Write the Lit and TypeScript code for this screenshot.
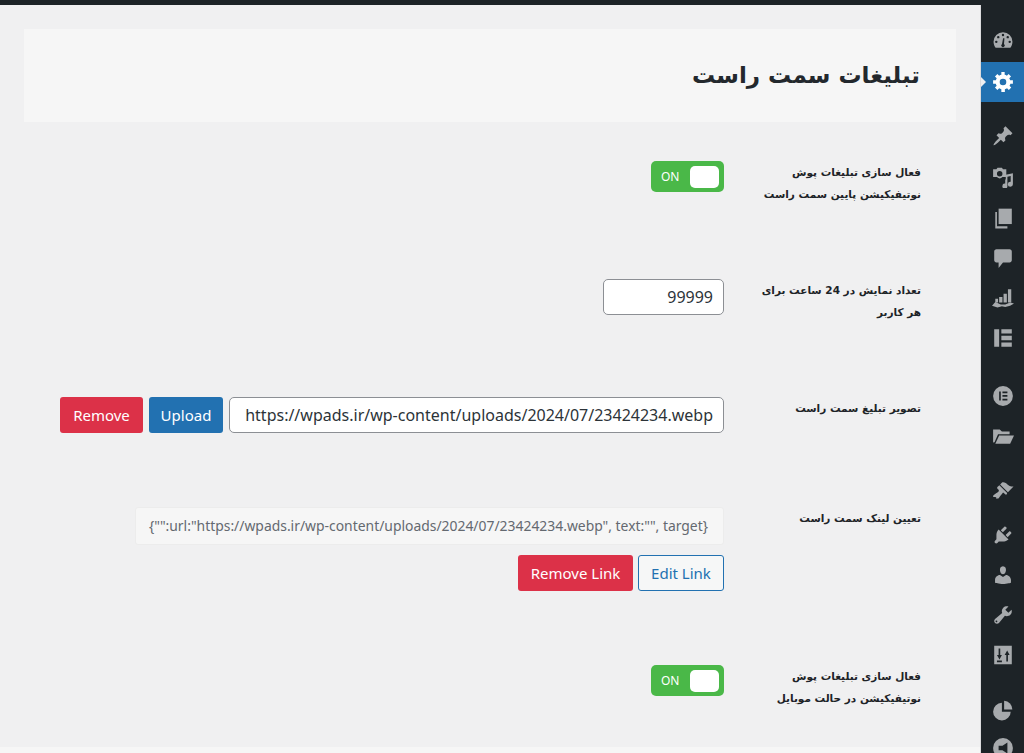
import { LitElement, html, css, svg } from "lit";
import { customElement } from "lit/decorators.js";

const URL_VALUE = "https://wpads.ir/wp-content/uploads/2024/07/23424234.webp";
const LINK_VALUE = '{"":url:"https://wpads.ir/wp-content/uploads/2024/07/23424234.webp", text:"", target}';

const icons = [
  { mt: 0, s: svg`<path fill-rule="evenodd" d="M3.3 17h13.400c1.200-1.500 1.900-3.400 1.900-5.400a8.600 8.600 0 0 0-17.200 0c0 2 .7 3.900 1.900 5.400zM10 4.300a1.100 1.100 0 1 1 0 2.200 1.100 1.100 0 0 1 0-2.200zM5.700 6.300a1.100 1.100 0 1 1 0 2.200 1.100 1.100 0 0 1 0-2.200zM14.300 6.300a1.100 1.100 0 1 1 0 2.200 1.100 1.100 0 0 1 0-2.200zM3.900 10.600a1.100 1.100 0 1 1 0 2.200 1.100 1.100 0 0 1 0-2.200zM16.100 10.600a1.100 1.100 0 1 1 0 2.200 1.100 1.100 0 0 1 0-2.200zM11.300 8.500l-.4 5.100a1.600 1.600 0 1 1-1.800 0l1-5.100z"/>` },
  { mt: 3, active: true, s: svg`<path fill-rule="evenodd" d="M19 11.500h-2.300c-.2.700-.4 1.400-.8 2l1.600 1.600-2.200 2.200-1.600-1.600c-.6.400-1.300.6-2 .8V19H8.500v-2.500c-.7-.2-1.400-.4-2-.8l-1.600 1.600-2.200-2.200 1.600-1.600c-.4-.6-.6-1.300-.8-2H1v-3h2.500c.2-.7.4-1.400.8-2L2.700 4.900l2.200-2.200 1.600 1.600c.6-.4 1.300-.6 2-.8V1h3v2.500c.7.2 1.400.4 2 .8l1.600-1.600 2.200 2.200-1.600 1.600c.4.6.6 1.300.8 2H19zM10 13a3 3 0 1 0 0-6 3 3 0 0 0 0 6z"/>` },
  { mt: 15, s: svg`<path d="M10.440 3.020l1.820-1.820 6.360 6.350-1.830 1.820c-1.050-.68-2.480-.57-3.410.36l-.75.75c-.92.93-1.040 2.350-.35 3.410l-1.830 1.820-2.410-2.410-2.800 2.790c-.42.42-3.380 2.710-3.800 2.290s1.860-3.390 2.280-3.810l2.790-2.790L4.100 9.360l1.830-1.820c1.050.69 2.480.57 3.400-.36l.75-.75c.93-.92 1.050-2.350.36-3.410z"/>` },
  { mt: 3, s: svg`<path fill-rule="evenodd" d="M1 3h3l1-1.500h4L10 3h3v7H9.500A3.500 3.500 0 0 1 4.500 10H1zM7 4.500a2.500 2.500 0 1 0 0 5 2.500 2.500 0 0 0 0-5z"/><path d="M19 6.500v10a2.300 2.300 0 1 1-2-2.200V9l-3 .7v8.500a2.300 2.300 0 1 1-2-2.200v-3.500l.5-.5V8z"/>` },
  { mt: 3, s: svg`<path d="M6 1.500h12v14H6z"/><path d="M4.500 4.500H3v15h11v-2H4.500z"/>` },
  { mt: 2, s: svg`<path d="M4 2h12c1.100 0 2 .9 2 2v8c0 1.100-.9 2-2 2h-6l-4 5v-5H4c-1.100 0-2-.9-2-2V4c0-1.100.9-2 2-2z"/>` },
  { mt: 1, s: svg`<path d="M6.500 10h3v5h-3zM10.500 7h3v8h-3zM14.500 3h3v12h-3zM3 11.500h2.500V15H3z"/><path d="M0 18l3-3.500 5 2.300h4l4.500-1.800 3.500 1-3.500 2-4.500 1-3-.5-4 1z"/>` },
  { mt: 3, s: svg`<path d="M2 2h4.500v16H2zM8.500 2H18v4H8.500zM8.500 8H18v4H8.500zM8.500 14H18v4H8.500z"/>` },
  { mt: 20, s: svg`<path fill-rule="evenodd" d="M10 1a9 9 0 1 0 0 18 9 9 0 0 0 0-18zM6.500 6h1.500v8H6.500zM9.500 6h4.500v1.500H9.500zM9.500 9.200h4.500v1.500H9.500zM9.500 12.500h4.500V14H9.500z"/>` },
  { mt: 2, s: svg`<path d="M1 4h6l2 2h7v2.500H5.500L2.300 15.600 1 16z"/><path d="M6.500 9.500H20l-3.500 7.500H3z"/>` },
  { mt: 17, s: svg`<path d="M14.480 11.060L7.410 3.990l1.500-1.500c.5-.56 2.300-.47 3.510.32 1.210.8 1.430 1.280 2.910 2.100 1.180.64 2.450 1.260 4.230.91zm-.71.71L6.700 4.700 4.930 6.470c-.39.39-.39 1.020 0 1.410l1.060 1.060c.39.39.39 1.030 0 1.420-.6.600-1.430 1.150-2.250 1.700-.81.550-1.630 1.090-2.150 1.620-.62.620-.76 1.190-.49 1.590.17.250.49.290.83.290.32 0 .63-.15 1.060-.07.53.08.58.61 1.130.42-.44.4-.5.88-.23 1.020.16.1.33.13.51.14.33.02.64-.05.9-.14.36-.1.62-.26.92-.58.53-.52 1.070-1.340 1.620-2.150.55-.82 1.100-1.650 1.700-2.250.39-.39 1.030-.39 1.420 0l1.060 1.060c.39.39 1.020.39 1.410 0z"/>` },
  { mt: 6, s: svg`<path d="M13.110 4.360L9.870 7.600 8 5.730l3.240-3.240c.35-.34 1.050-.2 1.560.32.52.51.66 1.210.31 1.550zm-8 1.770l.91-1.120 9.010 9.010-1.190.84c-.71.71-2.630 1.160-3.820 1.160H6.140L4.900 17.260c-.59.59-1.540.59-2.120 0-.59-.58-.59-1.530 0-2.120l1.240-1.240v-3.880c0-1.130.4-3.050 1.090-3.890zm7.260 3.970l3.240-3.240c.34-.35 1.040-.21 1.550.31.520.51.66 1.210.31 1.550l-3.240 3.250z"/>` },
  { mt: 2, s: svg`<path d="M10 9.250c-2.270 0-2.730-3.440-2.730-3.440C7 4.020 7.820 2 9.970 2c2.160 0 2.980 2.020 2.710 3.810 0 0-.41 3.440-2.680 3.440zm0 2.570L12.720 10c2.390 0 4.520 2.330 4.520 4.530v2.490s-3.650 1.130-7.240 1.130c-3.650 0-7.240-1.130-7.240-1.130v-2.490c0-2.250 1.940-4.480 4.470-4.480z"/>` },
  { mt: 2, s: svg`<path fill-rule="evenodd" d="M16.680 9.770c-1.340 1.340-3.300 1.670-4.950.99l-5.410 6.520c-.99.99-2.590.99-3.570 0-.99-.98-.99-2.580 0-3.570l6.520-5.420c-.68-1.650-.35-3.610.99-4.950 1.280-1.280 3.120-1.620 4.720-1.060l-2.890 2.890 2.820 2.820 2.860-2.860c.53 1.580.18 3.400-1.090 4.680zM4.660 15.340l-.21-.21c-.29-.29-.77-.29-1.060 0s-.29.77 0 1.060l.21.21c.29.29.77.29 1.060 0s.29-.77 0-1.060z"/>` },
  { mt: 2, s: svg`<path fill-rule="evenodd" d="M2 1.500h16v17H2zM6 4v6H4.500L6.800 14 9 10H7.500V4zM13 16v-6h-1.500L13.800 6 16 10h-1.500v6zM4.500 15h4.500v1.500H4.500z"/>` },
  { mt: 17, s: svg`<path d="M9 3.500v8h8a8 8 0 1 1-8-8z"/><path d="M11 1.500a8 8 0 0 1 7.500 8H11z"/>` },
  { mt: 0, s: svg`<path fill-rule="evenodd" d="M10 1a9 9 0 1 0 0 18 9 9 0 0 0 0-18zM14 5v10L9.500 12H6V8h3.500z"/>` },
];

@customElement("app-root")
export class AppRoot extends LitElement {
  static styles = css`
    :host {
      display: block;
      width: 1024px;
      height: 753px;
      overflow: hidden;
      background: #f0f0f1;
      font-family: "Noto Sans", "DejaVu Sans", sans-serif;
    }
    .top {
      height: 5px;
      background: #1d2327;
    }
    .shell {
      display: flex;
      height: 748px;
    }
    main {
      flex: 1;
      min-width: 0;
      padding: 24px 24px 0 24px;
      display: flex;
      flex-direction: column;
      border-right: 1px solid #dcdcde;
    }
    .head {
      height: 93px;
      flex: none;
      background: #f6f6f6;
      display: flex;
      align-items: center;
      padding: 0 36px;
      direction: rtl;
    }
    h1 {
      margin: 0;
      font: 700 23px/1.2 "DejaVu Sans", sans-serif;
      color: #23282d;
    }
    form {
      flex: 1;
      direction: rtl;
      padding: 39px 35px 0 0;
      display: flex;
      flex-direction: column;
    }
    .row {
      display: grid;
      grid-template-columns: 172px 1fr;
      column-gap: 25px;
      align-items: start;
      flex: none;
    }
    .r118 { height: 118px; }
    .r110 { height: 110px; }
    .r158 { height: 158px; }
    .r82 { height: 82px; }
    label {
      font: 700 10.5px/22px "DejaVu Sans", sans-serif;
      color: #1d2327;
    }
    .ctl {
      display: flex;
      gap: 6px;
      align-items: flex-start;
    }
    .stack {
      display: flex;
      flex-direction: column;
      gap: 10px;
      align-items: flex-start;
    }
    .toggle {
      direction: ltr;
      width: 73px;
      height: 31px;
      box-sizing: border-box;
      background: #4ab848;
      border-radius: 5px;
      display: flex;
      align-items: center;
      justify-content: space-between;
      padding: 0 5px 0 10px;
      color: #fff;
      font-size: 12px;
    }
    .knob {
      width: 29px;
      height: 22px;
      background: #fff;
      border-radius: 5px;
    }
    .field {
      direction: ltr;
      box-sizing: border-box;
      height: 36px;
      border: 1px solid #8c8f94;
      border-radius: 5px;
      background: #fff;
      color: #2c3338;
      font-size: 16px;
      line-height: 34px;
      padding: 0 10px;
      text-align: right;
      white-space: nowrap;
    }
    .num { width: 121px; }
    .url { width: 495px; }
    .btn {
      box-sizing: border-box;
      height: 36px;
      border-radius: 3px;
      border: 1px solid transparent;
      color: #fff;
      font-size: 15px;
      line-height: 34px;
      text-align: center;
      direction: ltr;
    }
    .blue { background: #2271b1; width: 74px; }
    .red { background: #dc3148; }
    .w83 { width: 83px; }
    .w115 { width: 115px; }
    .edit {
      width: 86px;
      background: #f6f7f7;
      border-color: #2271b1;
      color: #2271b1;
    }
    .ro {
      direction: ltr;
      box-sizing: border-box;
      width: 589px;
      height: 38px;
      background: #f6f6f6;
      border: 1px solid #ececec;
      border-radius: 3px;
      color: #646970;
      font-size: 13.9px;
      line-height: 36px;
      text-align: right;
      padding: 0 15px 0 9px;
      white-space: nowrap;
      overflow: hidden;
    }
    .btns { display: flex; gap: 5px; }
    .foot {
      height: 6px;
      flex: none;
      margin: 0 -24px 0 -24px;
      background: #f6f6f6;
    }
    nav {
      width: 43px;
      flex: none;
      background: #1d2327;
      display: flex;
      flex-direction: column;
      padding-top: 16px;
      box-sizing: border-box;
      overflow: hidden;
    }
    .item {
      flex: none;
      height: 38px;
      display: flex;
      align-items: center;
      justify-content: center;
      position: relative;
      color: #a7aaad;
    }
    .item svg { width: 22px; height: 22px; fill: currentColor; margin-left: 1px; }
    .item.active { height: 40px; background: #2271b1; color: #fff; }
    .item.active::before {
      content: "";
      position: absolute;
      left: 0;
      top: 50%;
      margin-top: -5px;
      border: 5px solid transparent;
      border-left-color: #f0f0f1;
    }
  `;

  private toggle() {
    return html`<div class="toggle"><span>ON</span><span class="knob"></span></div>`;
  }

  render() {
    return html`
      <div class="top"></div>
      <div class="shell">
        <main>
          <div class="head"><h1>تبلیغات سمت راست</h1></div>
          <form>
            <div class="row r118">
              <label>فعال سازی تبلیغات پوش نوتیفیکیشن پایین سمت راست</label>
              <div class="ctl">${this.toggle()}</div>
            </div>
            <div class="row r118">
              <label>تعداد نمایش در 24 ساعت برای هر کاربر</label>
              <div class="ctl"><div class="field num">99999</div></div>
            </div>
            <div class="row r110">
              <label>تصویر تبلیغ سمت راست</label>
              <div class="ctl">
                <div class="field url">${URL_VALUE}</div>
                <div class="btn blue">Upload</div>
                <div class="btn red w83">Remove</div>
              </div>
            </div>
            <div class="row r158">
              <label>تعیین لینک سمت راست</label>
              <div class="stack">
                <div class="ro">${LINK_VALUE}</div>
                <div class="btns">
                  <div class="btn edit">Edit Link</div>
                  <div class="btn red w115">Remove Link</div>
                </div>
              </div>
            </div>
            <div class="row r82">
              <label>فعال سازی تبلیغات پوش نوتیفیکیشن در حالت موبایل</label>
              <div class="ctl">${this.toggle()}</div>
            </div>
          </form>
          <div class="foot"></div>
        </main>
        <nav>
          ${icons.map(
            (i) => html`<div class="item ${i.active ? "active" : ""}" style="margin-top:${i.mt}px;">
              <svg viewBox="0 0 20 20">${i.s}</svg>
            </div>`
          )}
        </nav>
      </div>
    `;
  }
}
